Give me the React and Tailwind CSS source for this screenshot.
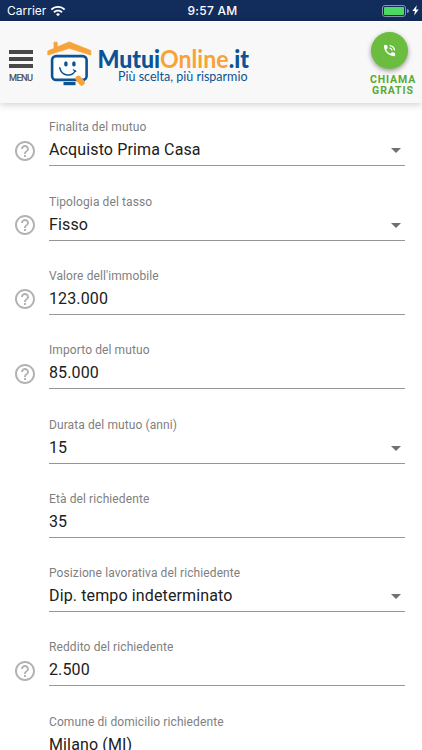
import { MdWifi, MdPhoneInTalk, MdHelpOutline, MdArrowDropDown } from 'react-icons/md'

const FIELDS = [
  { label: 'Finalita del mutuo', value: 'Acquisto Prima Casa', help: true, select: true },
  { label: 'Tipologia del tasso', value: 'Fisso', help: true, select: true },
  { label: "Valore dell'immobile", value: '123.000', help: true },
  { label: 'Importo del mutuo', value: '85.000', help: true },
  { label: 'Durata del mutuo (anni)', value: '15', select: true },
  { label: 'Età del richiedente', value: '35' },
  { label: 'Posizione lavorativa del richiedente', value: 'Dip. tempo indeterminato', select: true },
  { label: 'Reddito del richiedente', value: '2.500', help: true },
  { label: 'Comune di domicilio richiedente', value: 'Milano (MI)' },
]

function StatusBar() {
  return (
    <div className="grid grid-cols-3 items-center h-[21px] shrink-0 bg-[#122c5c] text-white font-['Inter',sans-serif] text-[12px] px-[7px]">
      <div className="flex items-center gap-[4px]">
        <span>Carrier</span>
        <MdWifi size={16} />
      </div>
      <span className="text-center font-medium tracking-[0.3px] pl-[3px] pt-px">9:57 AM</span>
      <div className="flex items-center justify-end -mr-1">
        <div className="w-6 h-3 border border-[#8794ac] rounded-[3px] p-px">
          <div className="h-full w-[20px] bg-[#4cd964] rounded-[1px]" />
        </div>
        <div className="w-[2px] h-1 bg-[#8794ac] rounded-r ml-px" />
        <svg width="7" height="11" viewBox="0 0 7 11" className="ml-[3px]">
          <path d="M4.8 0.3 L0.3 6 H3 L2.1 10.6 L6.7 4.6 H4 Z" fill="#fff" />
        </svg>
      </div>
    </div>
  )
}

function Logo() {
  return (
    <svg width="206" height="48" viewBox="0 0 206 48" className="ml-[14px] mt-[18px]">
      {/* monitor */}
      <rect x="5.1" y="16.1" width="34.5" height="23.8" rx="4" fill="#fff" stroke="#0b5394" strokeWidth="2.6" />
      <path d="M16.5 42 H28.5 V45.2 H16.5 Z" fill="#0b5394" />
      <ellipse cx="18.9" cy="23.9" rx="1.8" ry="2.6" fill="#0b5394" />
      <ellipse cx="26.9" cy="23.9" rx="1.8" ry="2.6" fill="#0b5394" />
      <path d="M12.8 27.8 C14.5 36.5 25.5 37 28 30.8" fill="none" stroke="#0b5394" strokeWidth="1.5" strokeLinecap="round" />
      <path d="M26.3 29.8 L28.9 31.4" stroke="#0b5394" strokeWidth="1.2" strokeLinecap="round" />
      <path d="M31.4 38.6 L34.8 42.5" stroke="#f8a33a" strokeWidth="6" strokeLinecap="round" />
      {/* roof */}
      <path d="M0.8 11 L7 8.4 V2.2 H10.2 V7 L22.3 1.9 L43.8 10.6 V15 L22.3 8.3 L0.8 15 Z" fill="#f8a33a" stroke="#f8a33a" strokeWidth="0.8" strokeLinejoin="round" />
      <text x="50.4" y="27.5" textLength="151.5" lengthAdjust="spacingAndGlyphs" fontFamily="Lato, sans-serif" fontWeight="900" fontSize="25.5" fill="#0b5394">
        Mutui<tspan fill="#f8a33a" fontWeight="700">Online</tspan>.it
      </text>
      <text x="71" y="40.5" textLength="129.5" lengthAdjust="spacingAndGlyphs" fontFamily="Lato, sans-serif" fontSize="12.4" fill="#0b5394">
        Più scelta, più risparmio
      </text>
    </svg>
  )
}

function Header() {
  return (
    <header className="relative flex items-start h-[82px] shrink-0 bg-[#f8f8f8] border-t border-white shadow-[0_1px_8px_rgba(0,0,0,0.22)]">
      <button className="w-6 ml-[9px] mt-[28px] flex flex-col gap-[3px]">
        <span className="h-1 w-full bg-[#484848]" />
        <span className="h-1 w-full bg-[#484848]" />
        <span className="h-1 w-full bg-[#484848]" />
        <svg width="25" height="12" viewBox="0 0 25 12" className="mt-px overflow-visible">
          <text x="0" y="9" textLength="24" lengthAdjust="spacing" fontFamily="Roboto, sans-serif" fontSize="9.2" fill="#484848" stroke="#484848" strokeWidth="0.2">MENU</text>
        </svg>
      </button>
      <Logo />
      <div className="ml-auto mr-[5px] mt-[10px] w-[50px] flex flex-col items-center">
        <div className="size-[37px] -ml-[6px] rounded-full bg-[#6abd3e] flex items-center justify-center text-white shadow-[0_2px_5px_rgba(0,0,0,0.4)]">
          <MdPhoneInTalk size={15} />
        </div>
        <div className="mt-[6px] ml-[2px] font-[Roboto,sans-serif] font-bold text-[10.5px] leading-[10.5px] tracking-[0.9px] text-center text-[#58aa32]">
          CHIAMA<br />GRATIS
        </div>
      </div>
    </header>
  )
}

function Field({ label, value, help, select }) {
  return (
    <div className="flex h-[74.3px] shrink-0 pl-[13px] pr-[17px]">
      <div className="w-9 shrink-0 pt-[20.5px]">
        {help && <MdHelpOutline size={24} color="#b2b2b2" className="-ml-[0.5px]" />}
      </div>
      <div className="flex-1">
        <div className="h-[18px] leading-[18px] text-[12px] tracking-[0.1px] text-[#808080]">{label}</div>
        <div className="flex items-center justify-between h-[30px] pb-px border-b border-[#969696]">
          <span className="text-[16px] leading-[26px] text-[#202020] tracking-[0.13px]">{value}</span>
          {select && <MdArrowDropDown size={24} color="#707070" className="-mr-[3px]" />}
        </div>
      </div>
    </div>
  )
}

export default function App() {
  return (
    <div className="w-[422px] h-[750px] overflow-hidden flex flex-col bg-white font-[Roboto,sans-serif]">
      <StatusBar />
      <Header />
      <main className="flex flex-col pt-[15.4px]">
        {FIELDS.map((field) => (
          <Field key={field.label} {...field} />
        ))}
      </main>
    </div>
  )
}
